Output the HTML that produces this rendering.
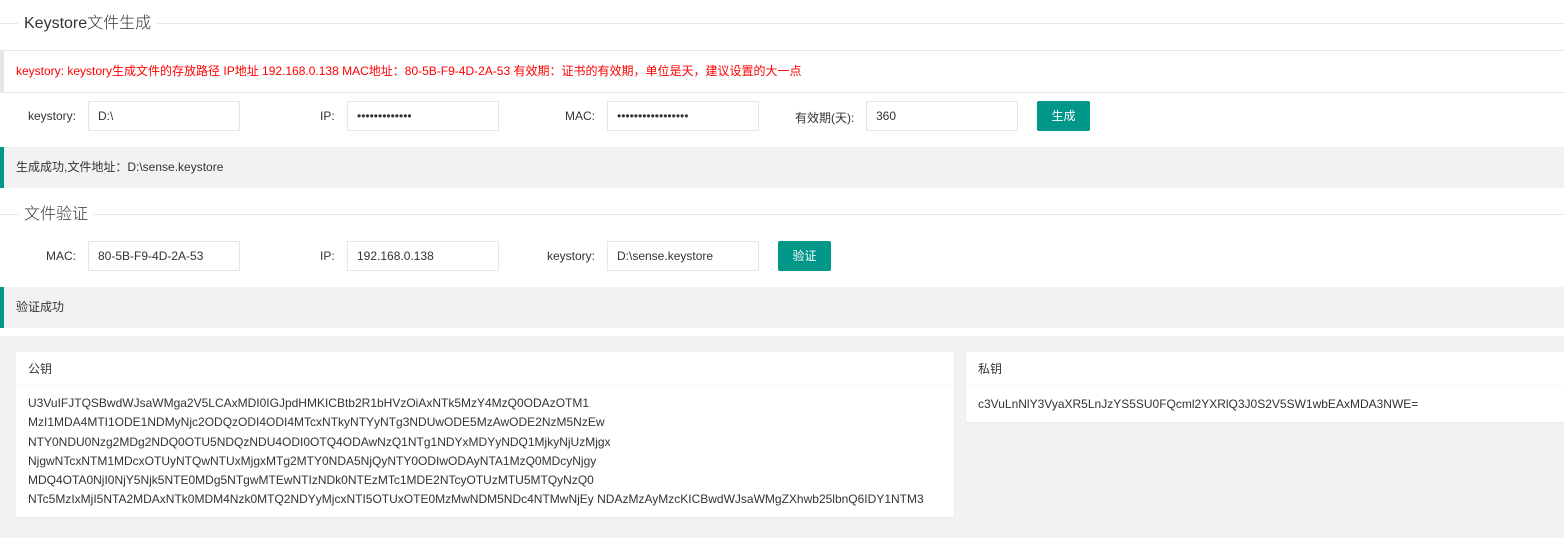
<!DOCTYPE html>
<html><head><meta charset="utf-8"><style>
*{box-sizing:border-box;margin:0;padding:0}
body{width:1564px;height:538px;background:#fff;font-family:"Liberation Sans","Noto Sans CJK SC",sans-serif;font-size:12px;color:#333;position:relative;overflow:hidden}
.a{position:absolute}
.line{position:absolute;left:0;right:0;height:1px;background:#e6e6e6}
.legend{position:absolute;left:18px;background:#fff;padding:0 6px;font-size:16px;color:#333;font-weight:300}
.lbl{position:absolute;font-size:12px;color:#333;text-align:right}
.inp{position:absolute;width:152px;height:30px;border:1px solid #e6e6e6;padding-left:9px;line-height:28px;font-size:12px;color:#333}
.btn{position:absolute;width:53px;height:30px;background:#009688;color:#fff;text-align:center;line-height:30px;font-size:12px;border-radius:2px}
.bar{position:absolute;left:0;right:0;height:41px;background:#f2f2f2;border-left:4px solid #009688;padding-left:12px;line-height:41px}
.card{position:absolute;background:#fff;box-shadow:0 1px 2px rgba(0,0,0,.05)}
.ch{height:34px;line-height:34px;border-bottom:1px solid #f6f6f6;padding-left:12px;color:#333}
</style></head><body>
<div class="line" style="top:23px"></div>
<div class="legend" style="top:14px;line-height:20px">Keystore文件生成</div>
<div class="a" style="left:0;right:0;top:50px;height:43px;border:1px solid #e6e6e6;border-left:4px solid #e6e6e6;border-right:none;color:#ff0000;line-height:40px;padding-left:12px">keystory: keystory生成文件的存放路径 IP地址 192.168.0.138 MAC地址：80-5B-F9-4D-2A-53 有效期：证书的有效期，单位是天，建议设置的大一点</div>
<div class="lbl" style="left:28px;top:109px">keystory:</div>
<div class="inp" style="left:88px;top:101px">D:\</div>
<div class="lbl" style="left:320px;top:109px">IP:</div>
<div class="inp" style="left:347px;top:101px">•••••••••••••</div>
<div class="lbl" style="left:565px;top:109px">MAC:</div>
<div class="inp" style="left:607px;top:101px">•••••••••••••••••</div>
<div class="lbl" style="left:795px;top:109px">有效期(天):</div>
<div class="inp" style="left:866px;top:101px">360</div>
<div class="btn" style="left:1037px;top:101px">生成</div>
<div class="bar" style="top:147px">生成成功,文件地址：D:\sense.keystore</div>
<div class="line" style="top:214px"></div>
<div class="legend" style="top:205px;line-height:20px">文件验证</div>
<div class="lbl" style="left:46px;top:249px">MAC:</div>
<div class="inp" style="left:88px;top:241px">80-5B-F9-4D-2A-53</div>
<div class="lbl" style="left:320px;top:249px">IP:</div>
<div class="inp" style="left:347px;top:241px">192.168.0.138</div>
<div class="lbl" style="left:547px;top:249px">keystory:</div>
<div class="inp" style="left:607px;top:241px">D:\sense.keystore</div>
<div class="btn" style="left:778px;top:241px">验证</div>
<div class="bar" style="top:287px">验证成功</div>
<div class="a" style="left:0;right:0;top:336px;bottom:0;background:#f2f2f2"></div>
<div class="card" style="left:16px;top:352px;width:938px;height:165px">
<div class="ch">公钥</div>
<div style="padding:8px 12px;line-height:19.3px">U3VuIFJTQSBwdWJsaWMga2V5LCAxMDI0IGJpdHMKICBtb2R1bHVzOiAxNTk5MzY4MzQ0ODAzOTM1<br>MzI1MDA4MTI1ODE1NDMyNjc2ODQzODI4ODI4MTcxNTkyNTYyNTg3NDUwODE5MzAwODE2NzM5NzEw<br>NTY0NDU0Nzg2MDg2NDQ0OTU5NDQzNDU4ODI0OTQ4ODAwNzQ1NTg1NDYxMDYyNDQ1MjkyNjUzMjgx<br>NjgwNTcxNTM1MDcxOTUyNTQwNTUxMjgxMTg2MTY0NDA5NjQyNTY0ODIwODAyNTA1MzQ0MDcyNjgy<br>MDQ4OTA0NjI0NjY5Njk5NTE0MDg5NTgwMTEwNTIzNDk0NTEzMTc1MDE2NTcyOTUzMTU5MTQyNzQ0<br>NTc5MzIxMjI5NTA2MDAxNTk0MDM4Nzk0MTQ2NDYyMjcxNTI5OTUxOTE0MzMwNDM5NDc4NTMwNjEy NDAzMzAyMzcKICBwdWJsaWMgZXhwb25lbnQ6IDY1NTM3</div>
</div>
<div class="card" style="left:966px;top:352px;width:598px;height:70px">
<div class="ch">私钥</div>
<div style="padding:9px 12px;line-height:18px">c3VuLnNlY3VyaXR5LnJzYS5SU0FQcml2YXRlQ3J0S2V5SW1wbEAxMDA3NWE=</div>
</div>
</body></html>
